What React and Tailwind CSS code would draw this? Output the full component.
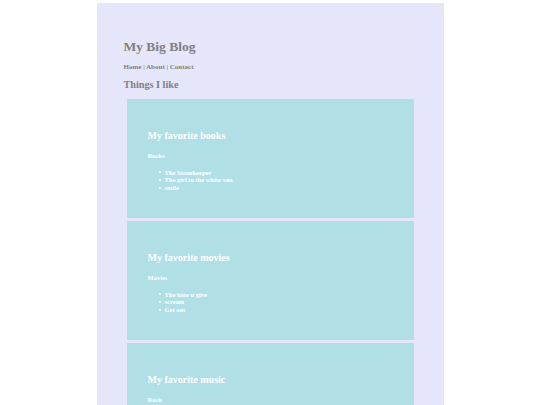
import React from 'react';

const cards = [
  { title: 'My favorite books', sub: 'Books', items: ['The Stonekeeper', 'The girl in the white van', 'smile'] },
  { title: 'My favorite movies', sub: 'Movies', items: ['The hate u give', 'scream', 'Get out'] },
  { title: 'My favorite music', sub: 'Rock', items: [] },
];

export default function App() {
  return (
    <div className="min-h-screen bg-white pt-[3px] font-['Liberation_Serif',serif] font-bold">
      <div className="mx-auto w-[347px] bg-[#e6e6fa] pt-[37px] px-[27px] pb-[20px] text-[#808080]">
        <h1 className="text-[13.5px] leading-none">My Big Blog</h1>
        <nav className="mt-[10.5px] text-[7px] leading-none">
          Home | About | Contact
        </nav>
        <h2 className="mt-[9px] text-[10.2px] leading-none">Things I like</h2>
        <div className="mt-[9px] flex flex-col gap-[3px] px-[3px]">
          {cards.map((c) => (
            <section key={c.title} className="h-[119px] bg-[#b0e0e6] pl-[21px] pt-[32px] text-white">
              <h3 className="text-[10px] leading-none">{c.title}</h3>
              <h4 className="mt-[11.6px] text-[6.5px] leading-none">{c.sub}</h4>
              <ul className="mt-[9.4px] pl-[11px] text-[6.5px] leading-[7.6px]">
                {c.items.map((i) => (
                  <li key={i} className="flex items-center">
                    <span className="mr-[4px] h-[2px] w-[2px] rounded-full bg-white" />
                    {i}
                  </li>
                ))}
              </ul>
            </section>
          ))}
        </div>
      </div>
    </div>
  );
}
